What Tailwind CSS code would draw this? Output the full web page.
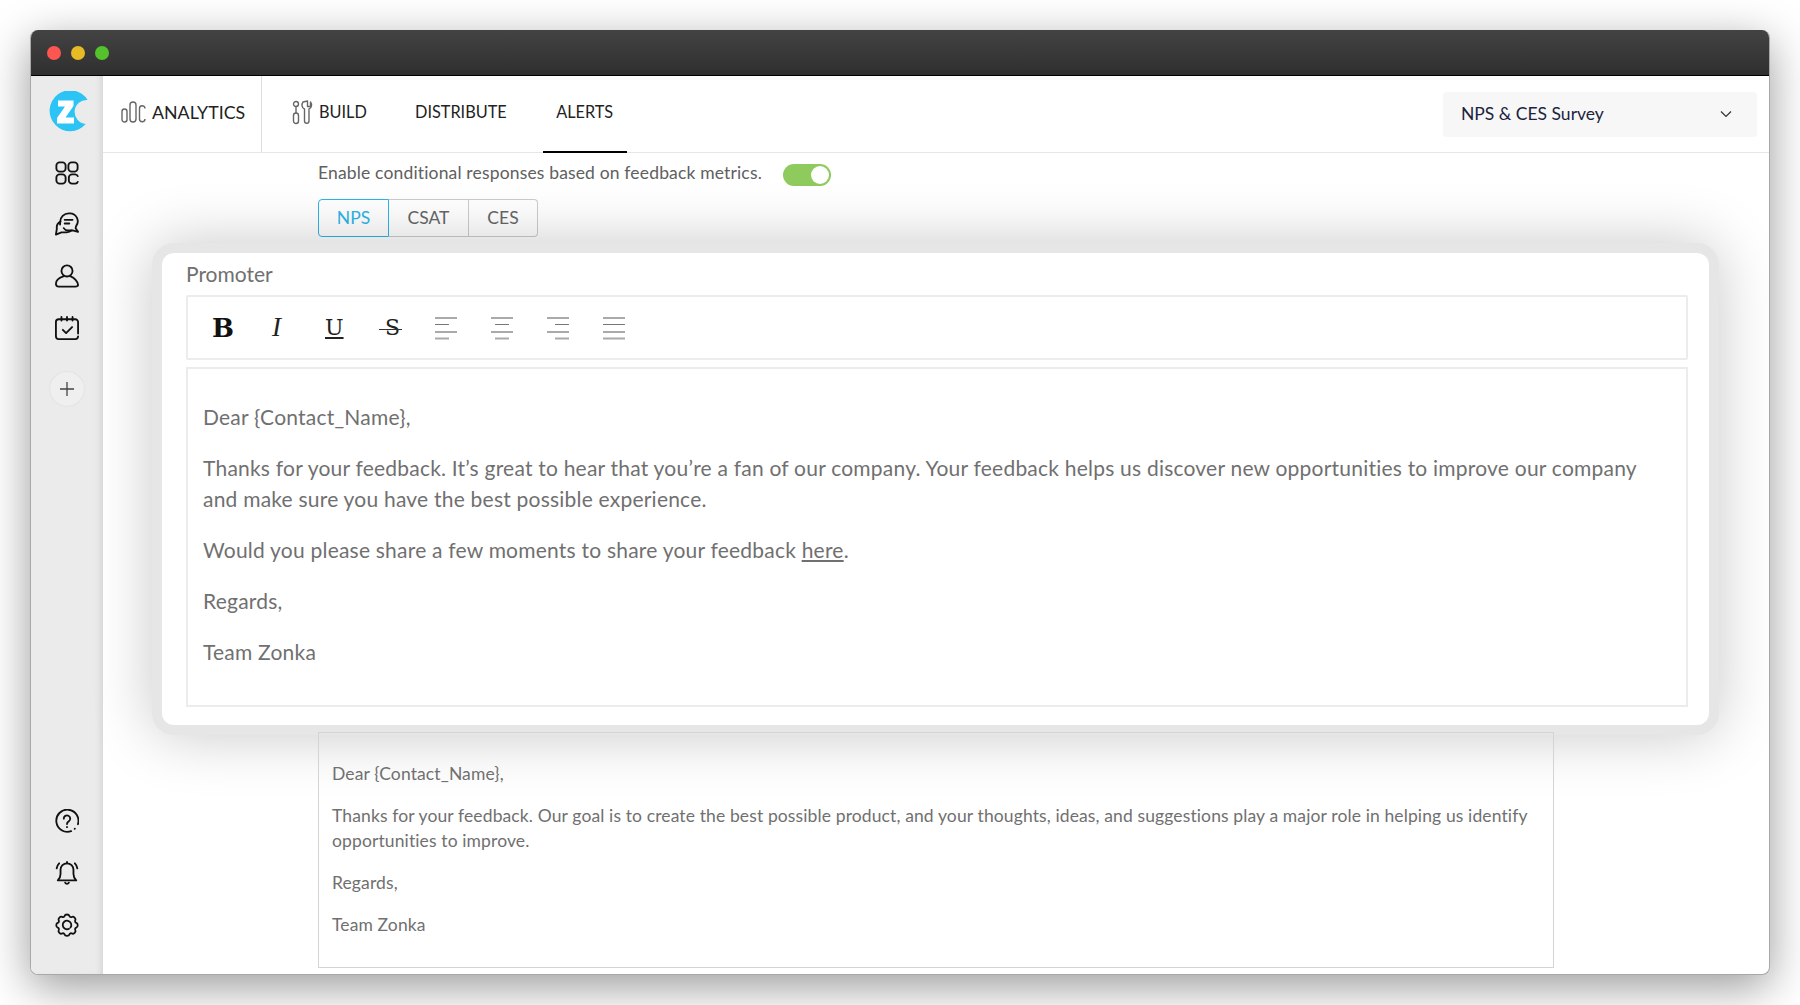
<!DOCTYPE html>
<html lang="en">
<head>
    <meta charset="UTF-8">
    <title>Zonka Feedback - Alerts</title>
    <script src="https://cdn.jsdelivr.net/npm/@tailwindcss/browser@4"></script>
</head>
<body class="bg-white h-[1005px] overflow-hidden font-['Lato',sans-serif] pt-[30px] px-[30px]">
    <div class="w-[1740px] h-[945px] rounded-[8px] overflow-hidden flex flex-col bg-white shadow-[0_12px_45px_rgba(0,0,0,0.4)] border-x border-b border-[#a8a8a8]">
        <!-- title bar -->
        <div class="h-[46px] shrink-0 bg-gradient-to-b from-[#434343] to-[#2f2f2f] border-b border-black flex items-center gap-[10px] pl-[16px]">
            <div class="w-[14px] h-[14px] rounded-full bg-[#fd5651]"></div>
            <div class="w-[14px] h-[14px] rounded-full bg-[#e6bb25]"></div>
            <div class="w-[14px] h-[14px] rounded-full bg-[#55c22d]"></div>
        </div>
        <div class="flex flex-1 min-h-0">
            <!-- sidebar -->
            <div class="w-[72px] shrink-0 bg-[#ebebeb] shadow-[inset_-6px_0_6px_-4px_rgba(0,0,0,0.1)] flex flex-col items-center pt-[15px] pb-[37px]">
                <svg class="ml-[5px]" width="41" height="41" viewBox="0 0 41 41"><path d="M38.600 9A20.500 20.500 0 1 0 36.700 33A12 12 0 0 1 38.600 9z" fill="#2cc4f5"/><path d="M9 9.500h15.500v5.500l-8 11.500h8.500v6H8v-5.500l8-11.500H9z" fill="#fff"/></svg>
                <svg class="mt-[29px]" width="24" height="24" viewBox="0 0 26 26" fill="none" stroke="#111" stroke-width="2"><rect x="1.500" y="1.500" width="10" height="10" rx="3.500"/><rect x="14.500" y="1.500" width="10" height="10" rx="3.500"/><rect x="1.500" y="14.500" width="10" height="10" rx="3.500"/><path d="M25 17a3.500 3.500 0 0 0-3-2.500h-3.500a3.500 3.500 0 0 0-3.500 3.500v3a3.500 3.500 0 0 0 3.500 3.500H22a3.500 3.500 0 0 0 3-2.500"/></svg>
                <svg class="mt-[27px]" width="24" height="24" viewBox="0 0 26 26" fill="none" stroke="#111" stroke-width="2" stroke-linejoin="round" stroke-linecap="round"><path d="M5.500 13.500V11A9.500 9.500 0 0 1 15 1.500h1A8.500 8.500 0 0 1 23 15c-.5 1.200-.8 1.800-.5 2.800l2.500 3.700-6-1.500H14c-2 0-3.500-.8-4.500-2.500"/><path d="M6 10.500C3 12 1.500 15 2 18l-1 6.500 6-2.500h5.500c2 0 4-.5 5.500-2"/><path d="M10.500 8.500h8.500M10.500 12.500h5"/></svg>
                <svg class="mt-[28px]" width="24" height="24" viewBox="0 0 26 26" fill="none" stroke="#111" stroke-width="2" stroke-linecap="round"><circle cx="13" cy="7.500" r="6"/><path d="M9 13.500c-4.500 1.500-8 4.500-8 8a3 3 0 0 0 3 3h18c2 0 3-1 3-2-.5-3.500-4-7.500-8-9"/></svg>
                <svg class="mt-[28px]" width="24" height="24" viewBox="0 0 26 26" fill="none" stroke="#111" stroke-width="2" stroke-linecap="round" stroke-linejoin="round"><path d="M25 19V6.500a3 3 0 0 0-3-3H4a3 3 0 0 0-3 3V22a3 3 0 0 0 3 3h18a3 3 0 0 0 3-3"/><path d="M7 1v4M13 1v4M19 1v4M8.500 15l3.500 3.500 6.500-6.500"/></svg>
                <div class="mt-[32px] w-[34px] h-[34px] rounded-full bg-[#efefef] shadow-[0_0_2px_rgba(0,0,0,0.1)] flex items-center justify-center">
                    <svg width="16" height="16" viewBox="0 0 16 16" stroke="#444" stroke-width="1.300"><path d="M8 1v14M1 8h14"/></svg>
                </div>
                <svg class="mt-auto" width="24" height="24" viewBox="0 0 26 26" fill="none" stroke="#111" stroke-width="2" stroke-linecap="round"><path d="M24.800 16.500A12 12 0 1 0 17.500 24"/><path d="M21.300 21.500l.2-.2"/><path d="M9.500 10.500a3.500 3.500 0 1 1 5.500 2.800c-1.200.8-2 1.400-2 2.900"/><path d="M13 19.500v.200"/></svg>
                <svg class="mt-[28px]" width="24" height="24" viewBox="0 0 26 26" fill="none" stroke="#111" stroke-width="2" stroke-linecap="round" stroke-linejoin="round"><path d="M13 2.500a7 7 0 0 0-7 7v4.500c0 3-1 5-3 7h20c-2-2-3-4-3-7V9.500a7 7 0 0 0-7-7z"/><path d="M13 1v1.500M11 23.500a2.200 2.200 0 0 0 4 0"/><path d="M4.500 2.500C3 4 2 6 1.800 8M21.500 2.500C23 4 24 6 24.200 8"/></svg>
                <svg class="mt-[28px]" width="24" height="24" viewBox="0 0 24 24" fill="none" stroke="#111" stroke-width="1.800" stroke-linecap="round" stroke-linejoin="round"><path d="M9.600 2.900c.5-1.900 4.300-1.900 4.800 0a1.700 1.700 0 0 0 2.500 1c1.700-1 4.400 1.700 3.400 3.400a1.700 1.700 0 0 0 1 2.500c1.900.5 1.900 4.300 0 4.800a1.700 1.700 0 0 0-1 2.500c1 1.700-1.700 4.400-3.400 3.400a1.700 1.700 0 0 0-2.500 1c-.5 1.900-4.300 1.900-4.800 0a1.700 1.700 0 0 0-2.500-1c-1.700 1-4.400-1.700-3.400-3.400a1.700 1.700 0 0 0-1-2.500c-1.900-.5-1.900-4.300 0-4.800a1.700 1.700 0 0 0 1-2.500c-1-1.700 1.700-4.400 3.400-3.400a1.700 1.700 0 0 0 2.500-1z"/><path d="M15.500 14.500A4.300 4.300 0 1 0 14 15.800"/></svg>
            </div>
            <!-- main -->
            <div class="relative flex-1 min-w-0 flex flex-col">
                <!-- top nav -->
                <div class="h-[77px] shrink-0 border-b border-[#e6e6e6] flex items-center text-[16.300px] text-[#222]">
                    <div class="w-[159px] h-full border-r border-[#dddddd] flex items-center pl-[18px] pb-[4px] gap-[6px] text-[17.800px]">
                        <svg width="25" height="24" viewBox="0 0 25 24" fill="none" stroke="#666" stroke-width="1.400"><rect x="1" y="9" width="5" height="13" rx="2.500"/><rect x="9" y="2" width="6" height="20" rx="3"/><path d="M24 8.500a2.500 2.500 0 0 0-5.500 0V19a2.500 2.500 0 0 0 5.500 0"/></svg>
                        <span>ANALYTICS</span>
                    </div>
                    <div class="flex items-center gap-[6px] ml-[30px] w-[78px] pb-[4px]">
                        <svg width="21" height="25" viewBox="0 0 21 25" fill="none" stroke="#666" stroke-width="1.400" stroke-linecap="round"><circle cx="4" cy="4" r="2.500"/><path d="M4 6.500V13"/><rect x="1.500" y="13" width="5" height="10.500" rx="2.500"/><path d="M11 2c-1.500 2-1.500 6 1.500 7v12a2.200 2.200 0 0 0 4.500 0V9c3-1 3-5 1.500-7v4.500h-3V1z" stroke-linejoin="round"/></svg>
                        <span>BUILD</span>
                    </div>
                    <span class="ml-[45px] pb-[4px]">DISTRIBUTE</span>
                    <div class="ml-[36px] w-[84px] h-full flex items-center justify-center pb-[4px] border-b-2 border-black relative top-px"><span>ALERTS</span></div>
                    <div class="ml-auto mr-[12px] w-[314px] h-[45px] rounded-[4px] bg-[#f7f7f7] flex items-center justify-between pl-[18px] pr-[25px] text-[#1c2340] text-[17.500px]">
                        <span>NPS &amp; CES Survey</span>
                        <svg width="12" height="8" viewBox="0 0 12 8" fill="none" stroke="#333" stroke-width="1.200"><path d="M1 1.500 6 6.500l5-5"/></svg>
                    </div>
                </div>
                <!-- page content -->
                <div class="pl-[215px] pr-[215px] flex-1 min-h-0 flex flex-col">
                    <div class="flex items-center h-[40px] pt-[1px] gap-[21px] text-[#606060] text-[17.500px] tracking-[0.16px]">
                        <span>Enable conditional responses based on feedback metrics.</span>
                        <div class="w-[48px] h-[22px] mt-[3px] rounded-full bg-[#8ecb5c] flex items-center justify-end pr-[2px]">
                            <div class="w-[18px] h-[18px] rounded-full bg-white"></div>
                        </div>
                    </div>
                    <div class="flex w-fit h-[38px] mt-[6px] text-[17.500px] text-[#666]">
                        <div class="w-[71px] flex items-center justify-center border border-[#2cb5e8] text-[#2cb5e8] rounded-l-[4px]">NPS</div>
                        <div class="w-[80px] flex items-center justify-center border-y border-r border-[#cccccc]">CSAT</div>
                        <div class="w-[69px] flex items-center justify-center border-y border-r border-[#cccccc] rounded-r-[4px]">CES</div>
                    </div>
                    <div class="relative z-10 mt-auto mb-[6px] h-[236px] border border-[#d4d4d4] pl-[13px] pr-[20px] text-[#707070] text-[17.500px] tracking-[0.12px] leading-[25px]">
                        <p class="mt-[28px]">Dear {Contact_Name},</p>
                        <p class="mt-[17px]">Thanks for your feedback. Our goal is to create the best possible product, and your thoughts, ideas, and suggestions play a major role in helping us identify opportunities to improve.</p>
                        <p class="mt-[17px]">Regards,</p>
                        <p class="mt-[17px]">Team Zonka</p>
                    </div>
                </div>
                <!-- promoter card, floats over the page -->
                <div class="absolute left-[49px] top-[167px] w-[1567px] h-[492px] rounded-[22px] bg-[#e6e6e6] p-[10px] shadow-[0_0_60px_rgba(0,0,0,0.22)]">
                    <div class="h-full rounded-[12px] bg-white pl-[24px] pr-[21px] pt-[7px] flex flex-col">
                        <div class="text-[21px] leading-[28px] text-[#707070] h-[35px]">Promoter</div>
                        <div class="h-[65px] shrink-0 border-2 border-[#ececec] rounded-[2px] flex items-center pl-[24px] text-[#111]">
                            <span class="w-[57px] font-['DejaVu_Serif',serif] font-bold text-[26px] leading-none">B</span>
                            <span class="w-[56px] pl-[3px] font-['Liberation_Serif',serif] italic text-[27px] text-[#222] leading-none">I</span>
                            <span class="w-[56px] font-['DejaVu_Serif',serif] text-[22px] text-[#222] underline underline-offset-2 leading-none">U</span>
                            <span class="relative w-[54px] pl-[4px] font-['DejaVu_Serif',serif] text-[22px] text-[#222] leading-none">S<span class="absolute left-[-2px] top-[12px] w-[23px] h-[1.500px] bg-[#333]"></span></span>
                            <svg width="56" height="24" viewBox="0 0 56 24"><path d="M0 2h22M0 16h22" stroke="#aaa" stroke-width="2"/><path d="M0 8.500h14" stroke="#777"/><path d="M0 22.500h14" stroke="#aaa" stroke-width="2"/></svg>
                            <svg width="56" height="24" viewBox="0 0 56 24"><path d="M0 2h22M0 16h22" stroke="#aaa" stroke-width="2"/><path d="M4 8.500h14" stroke="#777"/><path d="M4 22.500h14" stroke="#aaa" stroke-width="2"/></svg>
                            <svg width="56" height="24" viewBox="0 0 56 24"><path d="M0 2h22M0 16h22" stroke="#aaa" stroke-width="2"/><path d="M8 8.500h14" stroke="#777"/><path d="M8 22.500h14" stroke="#aaa" stroke-width="2"/></svg>
                            <svg width="56" height="24" viewBox="0 0 56 24"><path d="M0 2h22M0 16h22M0 22.500h22" stroke="#aaa" stroke-width="2"/><path d="M0 8.500h22" stroke="#777"/></svg>
                        </div>
                        <div class="mt-[7px] h-[340px] border-2 border-[#ececec] pt-[32px] px-[15px] text-[21px] tracking-[0.22px] leading-[31px] text-[#707070]">
                            <p>Dear {Contact_Name},</p>
                            <p class="mt-[20px]">Thanks for your feedback. It’s great to hear that you’re a fan of our company. Your feedback helps us discover new opportunities to improve our company and make sure you have the best possible experience.</p>
                            <p class="mt-[20px]">Would you please share a few moments to share your feedback <u>here</u>.</p>
                            <p class="mt-[20px]">Regards,</p>
                            <p class="mt-[20px]">Team Zonka</p>
                        </div>
                    </div>
                </div>
            </div>
        </div>
    </div>
</body>
</html>
